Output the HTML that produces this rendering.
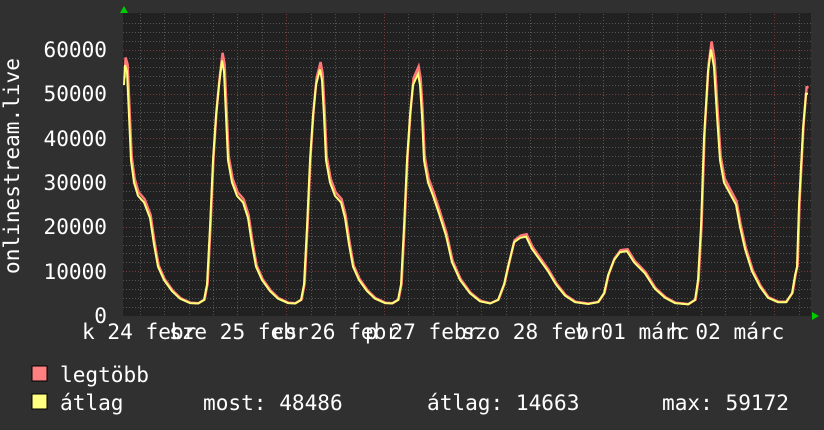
<!DOCTYPE html>
<html><head><meta charset="utf-8"><style>
html,body{margin:0;padding:0;background:#303030;}
body{width:824px;height:430px;position:relative;overflow:hidden;font-family:"DejaVu Sans Mono","Liberation Mono",monospace;color:#fff;}
.t{position:absolute;font-size:21.1px;line-height:1;white-space:pre;}
</style></head><body>
<svg width="824" height="430" style="position:absolute;left:0;top:0" id="g">
<rect x="123" y="13" width="688" height="303" fill="#212121"/>
<g id="grid"></g>
<polyline id="red" fill="none" stroke="#ff7777" stroke-width="2.5"/>
<polyline id="yel" fill="none" stroke="#ffff77" stroke-width="2"/>
<polygon points="120,13 128,13 124,6" fill="#00cc00"/>
<polygon points="812,312 812,320 819,316" fill="#00cc00"/>
<rect x="32" y="366" width="15" height="15" fill="#ff8080" stroke="#000" stroke-width="1"/>
<rect x="32" y="394" width="15" height="15" fill="#ffff80" stroke="#000" stroke-width="1"/>
<text x="0" y="0" transform="translate(19,166) rotate(-90)" text-anchor="middle" font-family="DejaVu Sans Mono, Liberation Mono, monospace" font-size="21.1" fill="#fff">onlinestream.live</text>
</svg>
<div class="t" style="right:717px;top:39px">60000</div>
<div class="t" style="right:717px;top:83px">50000</div>
<div class="t" style="right:717px;top:128px">40000</div>
<div class="t" style="right:717px;top:172px">30000</div>
<div class="t" style="right:717px;top:216px">20000</div>
<div class="t" style="right:717px;top:261px">10000</div>
<div class="t" style="right:717px;top:305px">0</div>
<div class="t" style="left:82px;top:321px">k 24 febr</div>
<div class="t" style="left:169px;top:321px">sze 25 febr</div>
<div class="t" style="left:272px;top:321px">cs 26 febr</div>
<div class="t" style="left:365px;top:321px">p 27 febr</div>
<div class="t" style="left:462px;top:321px">szo 28 febr</div>
<div class="t" style="left:575px;top:321px">v 01 márc</div>
<div class="t" style="left:670px;top:321px">h 02 márc</div>
<div class="t" style="left:60px;top:364px">legtöbb</div>
<div class="t" style="left:60px;top:392px">átlag</div>
<div class="t" style="left:203px;top:392px">most: 48486</div>
<div class="t" style="left:427px;top:392px">átlag: 14663</div>
<div class="t" style="left:662px;top:392px">max: 59172</div>
<script>
var ns="http://www.w3.org/2000/svg",g=document.getElementById("grid");
function ln(x1,y1,x2,y2,c){var l=document.createElementNS(ns,"line");l.setAttribute("x1",x1);l.setAttribute("y1",y1);l.setAttribute("x2",x2);l.setAttribute("y2",y2);l.setAttribute("stroke",c);l.setAttribute("stroke-width","1");l.setAttribute("stroke-dasharray","1,2");g.appendChild(l);}
function Y(v){return 315.5-v*266/60000;}
for(var v=2000;v<=66000;v+=2000){var y=Math.round(Y(v))+0.5;if(y<14)break;ln(123,y,811,y,v%10000==0?"#7a3a3a":"#555");}
for(var x=139.8;x<811;x+=24.4){var d=Math.abs(((x-188.6)/97.6)-Math.round((x-188.6)/97.6))<0.05;var xx=Math.round(x)+0.5;ln(xx,14,xx,316,d?"#7a3a3a":"#555");}
var P=[[124,52000],[125,56500],[127,55000],[129,45000],[131,35000],[134,30000],[138,27000],[144,25500],[150,22000],[154,16000],[158,11000],[164,8000],[172,5500],[180,3800],[190,2800],[198,2700],[204,3500],[207,7000],[210,20000],[213,35000],[216,45000],[219,52000],[222,57500],[224,55000],[226,45000],[228,35000],[232,30000],[237,27000],[243,25500],[248,22000],[252,16000],[256,11000],[262,8000],[270,5500],[278,3800],[288,2800],[295,2700],[301,3500],[304,7000],[307,20000],[310,35000],[313,45000],[316,52000],[320,55500],[322,53000],[324,45000],[326,35000],[330,30000],[335,27000],[341,25500],[345,22000],[349,16000],[353,11000],[359,8000],[367,5500],[375,3800],[385,2800],[392,2700],[398,3500],[401,7000],[404,20000],[407,35000],[410,45000],[413,52000],[418,54500],[420,52000],[422,45000],[424,35000],[428,30000],[433,27000],[439,23000],[446,18000],[452,12000],[460,8000],[470,5000],[480,3200],[490,2700],[498,3500],[504,7000],[508,11000],[514,16500],[520,17500],[526,17800],[532,15000],[540,12500],[548,10000],[556,7000],[565,4500],[575,3000],[588,2600],[598,3000],[604,5000],[608,9000],[614,12500],[620,14300],[627,14500],[634,12000],[645,9500],[655,6000],[665,4000],[675,2800],[688,2500],[695,3500],[698,8000],[701,20000],[704,40000],[708,55000],[711,60000],[714,56000],[717,45000],[720,35000],[724,30000],[730,27500],[736,25000],[740,20000],[745,15000],[752,10000],[760,6500],[768,4000],[778,3000],[786,3000],[792,5000],[795,9000],[797,11000],[799,25000],[803,42000],[806,50000],[808,50000]];
var a=[],b=[];P.forEach(function(p){a.push(p[0]+","+Y(p[1]).toFixed(1));b.push((p[0]+0.6)+","+Y(p[1]*1.03).toFixed(1));});
document.getElementById("yel").setAttribute("points",a.join(" "));
document.getElementById("red").setAttribute("points",b.join(" "));
</script>
</body></html>
